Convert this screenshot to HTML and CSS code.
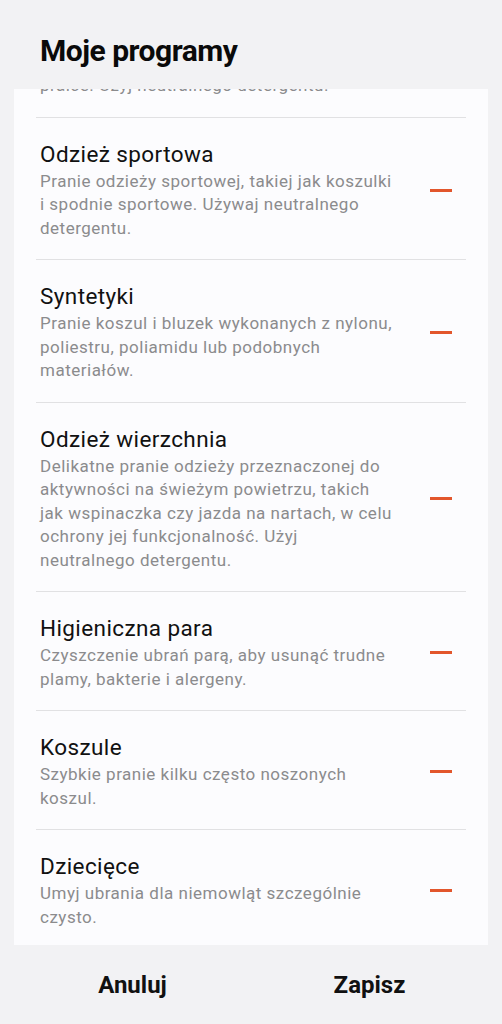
FILE: index.html
```html
<!DOCTYPE html>
<html lang="pl">
<head>
<meta charset="utf-8">
<link rel="stylesheet" href="styles.css">
</head>
<body>
<div class="screen">
  <h1 class="title">Moje programy</h1>
  <div class="card">
    <div class="list">
      <div class="item partial">
        <div class="text">
          <div class="desc">pralce. Użyj neutralnego detergentu.</div>
        </div>
      </div>
      <div class="item">
        <div class="text">
          <div class="name">Odzież sportowa</div>
          <div class="desc">Pranie odzieży sportowej, takiej jak koszulki i spodnie sportowe. Używaj neutralnego detergentu.</div>
        </div>
        <span class="minus"></span>
      </div>
      <div class="item">
        <div class="text">
          <div class="name">Syntetyki</div>
          <div class="desc">Pranie koszul i bluzek wykonanych z nylonu, poliestru, poliamidu lub podobnych materiałów.</div>
        </div>
        <span class="minus"></span>
      </div>
      <div class="item">
        <div class="text">
          <div class="name">Odzież wierzchnia</div>
          <div class="desc">Delikatne pranie odzieży przeznaczonej do aktywności na świeżym powietrzu, takich jak wspinaczka czy jazda na nartach, w celu ochrony jej funkcjonalność. Użyj neutralnego detergentu.</div>
        </div>
        <span class="minus"></span>
      </div>
      <div class="item">
        <div class="text">
          <div class="name">Higieniczna para</div>
          <div class="desc">Czyszczenie ubrań parą, aby usunąć trudne plamy, bakterie i alergeny.</div>
        </div>
        <span class="minus"></span>
      </div>
      <div class="item">
        <div class="text">
          <div class="name">Koszule</div>
          <div class="desc">Szybkie pranie kilku często noszonych koszul.</div>
        </div>
        <span class="minus"></span>
      </div>
      <div class="item">
        <div class="text">
          <div class="name">Dziecięce</div>
          <div class="desc">Umyj ubrania dla niemowląt szczególnie czysto.</div>
        </div>
        <span class="minus"></span>
      </div>
    </div>
  </div>
  <div class="actions">
    <button class="btn">Anuluj</button>
    <button class="btn">Zapisz</button>
  </div>
</div>
</body>
</html>
```

FILE: styles.css
```css
* { box-sizing: border-box; }
html, body {
  margin: 0;
  padding: 0;
  background: #f2f2f4;
  font-family: Roboto, "Noto Sans", sans-serif;
}
.screen {
  width: 502px;
  height: 1024px;
  display: flex;
  flex-direction: column;
  padding: 0 14px;
}
.title {
  margin: 0;
  padding: 33px 0 0 26px;
  height: 89px;
  flex: none;
  font-size: 30px;
  font-weight: 700;
  line-height: 36px;
  color: #0a0a0a;
  letter-spacing: -0.5px;
}
.card {
  background: #fcfcfe;
  height: 856px;
  flex: none;
  overflow: hidden;
  padding: 0 22px;
}
.list {
  display: flex;
  flex-direction: column;
}
.item {
  display: flex;
  align-items: center;
  padding: 22px 14px 19px 4px;
  border-bottom: 1px solid #e1e1e3;
}
.item:last-child { border-bottom: none; }
.item.partial {
  margin-top: -14.6px;
  padding-top: 0;
}
.text {
  width: 353px;
  flex: none;
  margin-right: 37px;
}
.name {
  font-size: 22.5px;
  line-height: 28px;
  color: #111;
  letter-spacing: 0.4px;
  margin-bottom: 2px;
}
.desc {
  font-size: 17px;
  line-height: 23.5px;
  color: #8b8b8d;
  letter-spacing: 0.5px;
}
.minus {
  width: 22px;
  height: 3px;
  background: #e2562c;
  flex: none;
}
.actions {
  display: flex;
  flex: 1;
}
.btn {
  flex: 1;
  border: none;
  background: none;
  font-family: Roboto, "Noto Sans", sans-serif;
  font-size: 24px;
  font-weight: 700;
  color: #111;
  padding: 0;
}
```
